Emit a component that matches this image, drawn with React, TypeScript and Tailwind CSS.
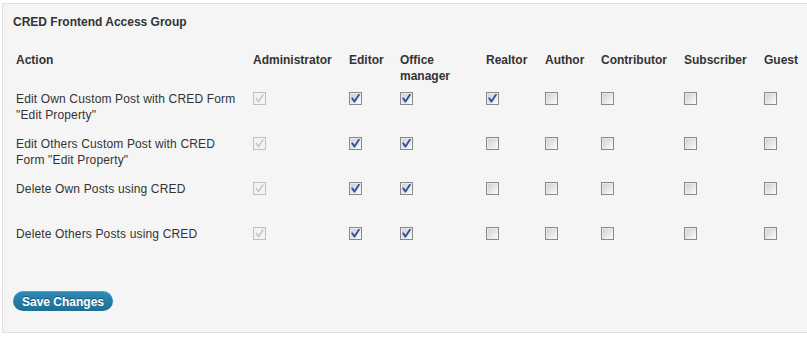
import React, { useState } from 'react';

const roles = ['Administrator', 'Editor', 'Office manager', 'Realtor', 'Author', 'Contributor', 'Subscriber', 'Guest'];

const initialRows = [
  { action: 'Edit Own Custom Post with CRED Form "Edit Property"', checks: [true, true, true, true, false, false, false, false] },
  { action: 'Edit Others Custom Post with CRED Form "Edit Property"', checks: [true, true, true, false, false, false, false, false] },
  { action: 'Delete Own Posts using CRED', checks: [true, true, true, false, false, false, false, false] },
  { action: 'Delete Others Posts using CRED', checks: [true, true, true, false, false, false, false, false] },
];

const Checkbox: React.FC<{ checked: boolean; disabled?: boolean; onChange?: () => void }> = ({ checked, disabled, onChange }) => (
  <span
    onClick={disabled ? undefined : onChange}
    className={`mt-[2px] flex h-[13px] w-[13px] items-center justify-center border ${
      disabled
        ? 'border-[#c0c0c0] bg-[#f3f3f3]'
        : 'border-[#8a8a8a] bg-gradient-to-br from-[#c9cdd3] to-[#fdfdfd] shadow-[inset_1px_1px_0_#e8e8e8] cursor-pointer'
    }`}
  >
    {checked && (
      <svg width="9" height="9" viewBox="0 0 9 9">
        <path
          d="M1.3 4.4 L3.5 7.6 L7.9 0.8"
          fill="none"
          stroke={disabled ? '#c0c0c0' : '#354f9c'}
          strokeWidth={disabled ? 1.3 : 1.9}
          strokeLinecap="round"
          strokeLinejoin="round"
        />
      </svg>
    )}
  </span>
);

const App: React.FC = () => {
  const [rows, setRows] = useState(initialRows);

  const toggle = (r: number, c: number) => {
    setRows(rows.map((row, i) => (i === r ? { ...row, checks: row.checks.map((v, j) => (j === c ? !v : v)) } : row)));
  };

  const cols = 'grid grid-cols-[237px_96px_51px_86px_59px_56px_83px_80px_40px]';

  return (
    <div className="h-[337px] w-[807px] overflow-hidden bg-white pl-[2px] pt-[3px] font-['Liberation_Sans',Arial,sans-serif] text-[12px] leading-[16px] text-[#333]">
      <div className="h-[330px] w-[812px] border border-[#dfdfdf] bg-[#f5f5f5] pl-[10px] pt-[10px]">
        <h2 className="font-bold text-[#333]">CRED Frontend Access Group</h2>

        <div className="ml-[3px] mt-[22px]">
          <div className={`${cols} h-[38px] font-bold`}>
            <div>Action</div>
            {roles.map((role) => (
              <div key={role} className={role === 'Office manager' ? 'w-[60px]' : ''}>
                {role}
              </div>
            ))}
          </div>

          {rows.map((row, r) => (
            <div key={row.action} className={`${cols} h-[45px]`}>
              <div className="w-[225px] pt-[1px] tracking-[0.15px]">{row.action}</div>
              {row.checks.map((checked, c) => (
                <div key={c}>
                  <Checkbox checked={checked} disabled={c === 0} onChange={() => toggle(r, c)} />
                </div>
              ))}
            </div>
          ))}
        </div>

        <button className="mt-[21px] h-[20px] w-[100px] rounded-full bg-gradient-to-b from-[#2e8bb8] to-[#1f6f95] pt-[1px] text-[12px] font-bold text-white [text-shadow:0_-1px_0_rgba(0,0,0,0.35)] shadow-[inset_0_1px_0_rgba(255,255,255,0.2)]">
          Save Changes
        </button>
      </div>
    </div>
  );
};

export default App;
